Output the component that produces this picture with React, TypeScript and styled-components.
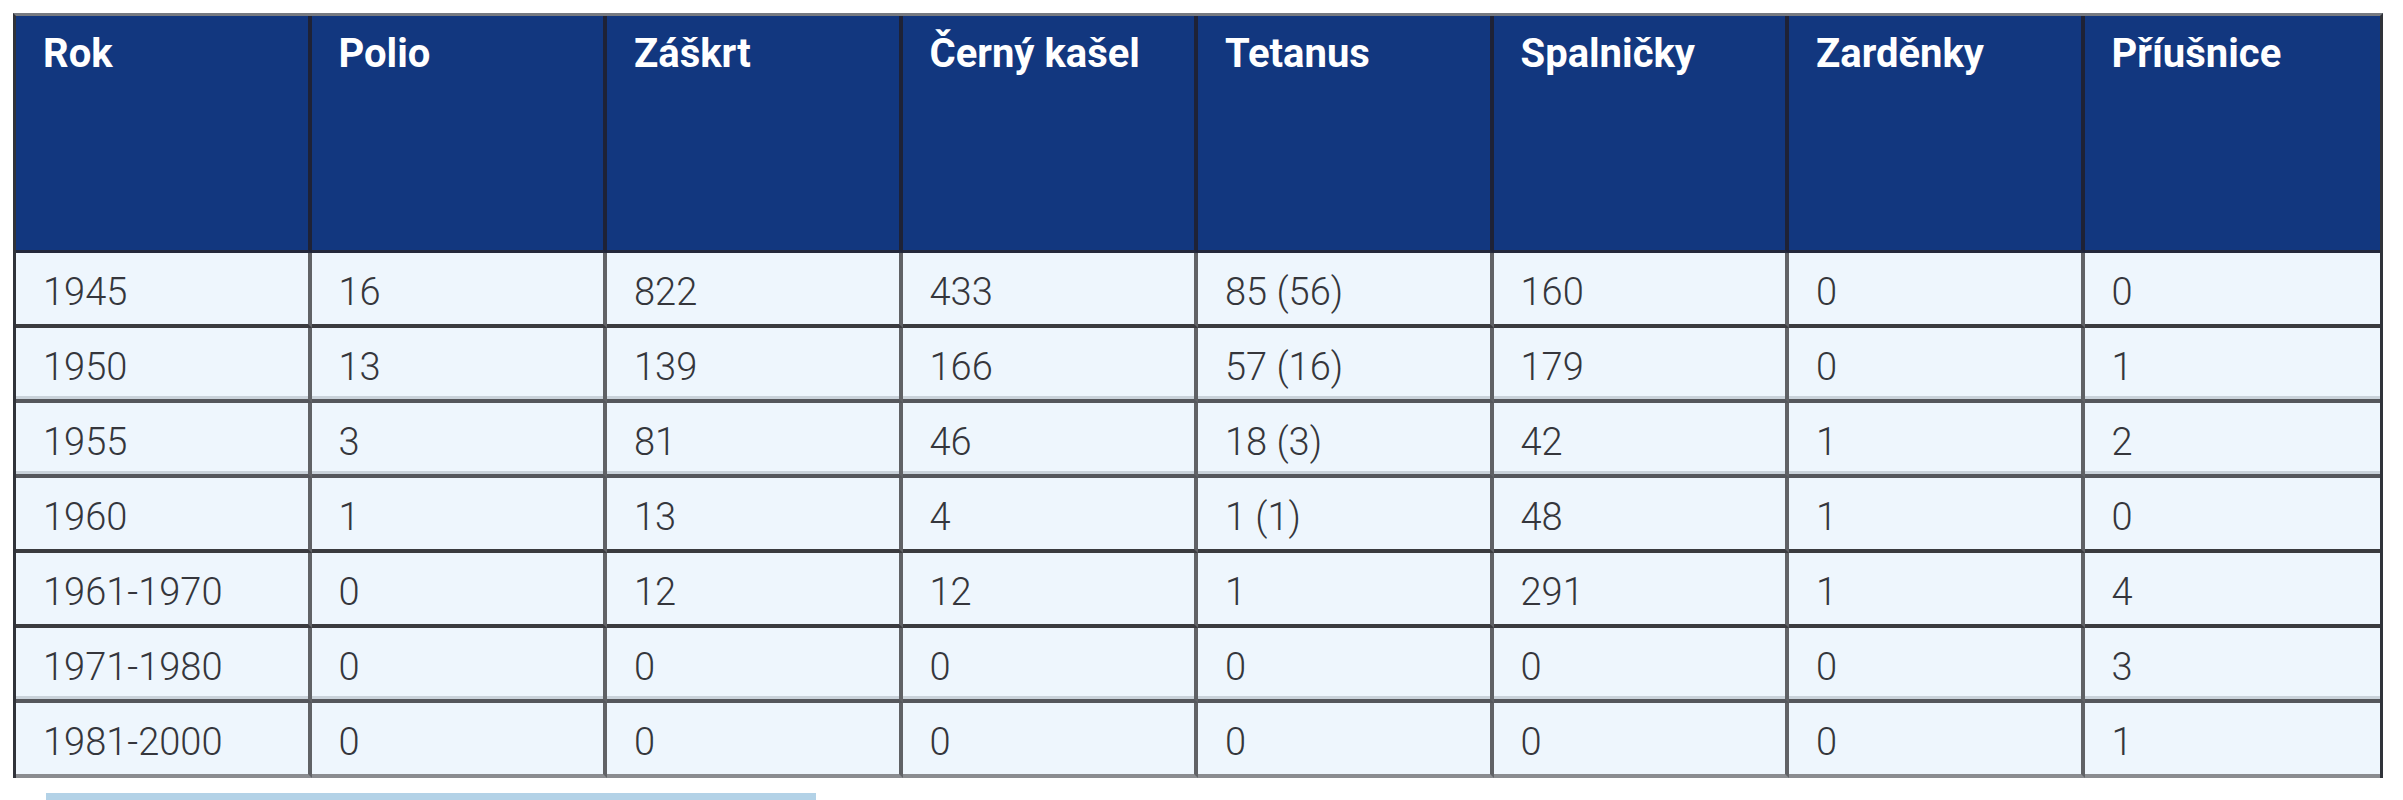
import React from "react";
import styled, { createGlobalStyle } from "styled-components";

const GlobalStyle = createGlobalStyle`
  html, body {
    margin: 0;
    padding: 0;
    background: #ffffff;
  }
  body {
    font-family: Roboto, "Noto Sans", "Liberation Sans", sans-serif;
  }
`;

const Page = styled.div`
  padding: 13px 0 0 13px;
  width: 2403px;
  height: 800px;
  box-sizing: border-box;
  display: flex;
  flex-direction: column;
  align-items: flex-start;
`;

const Grid = styled.div`
  display: grid;
  grid-template-columns: repeat(8, 1fr);
  width: 2370px;
  box-sizing: border-box;
  border-top: 3px solid #777a80;
  border-left: 3px solid #30333a;
  border-right: 3px solid #30333a;
`;

const HeadCell = styled.div<{ $last?: boolean }>`
  height: 237px;
  box-sizing: border-box;
  background: #12377f;
  color: #ffffff;
  font-family: Roboto, "Noto Sans", sans-serif;
  font-weight: 700;
  font-size: 40px;
  line-height: 48px;
  padding: 14px 0 0 27px;
  border-bottom: 3px solid #23283a;
  border-right: ${(p) => (p.$last ? "none" : "4px solid #1e2236")};
  white-space: nowrap;
`;

const BodyCell = styled.div<{ $last?: boolean; $bottom?: boolean; $soft?: boolean }>`
  height: 75px;
  box-sizing: border-box;
  background: #eef6fd;
  color: #35363c;
  font-family: Roboto, "Noto Sans", sans-serif;
  font-weight: 300;
  font-size: 38px;
  line-height: 38px;
  padding: 20px 0 0 27px;
  border-right: ${(p) => (p.$last ? "none" : "4px solid #606266")};
  border-bottom: 4px solid
    ${(p) => (p.$bottom ? "#8a8c90" : p.$soft ? "#55575c" : "#3a3b3f")};
  box-shadow: ${(p) => (p.$soft ? "inset 0 -3px 0 #c9d2da" : "none")};
  white-space: nowrap;
`;

const Bar = styled.div`
  margin: 15px 0 0 33px;
  width: 770px;
  height: 7px;
  background: #b3d2e7;
`;

const headers = [
  "Rok",
  "Polio",
  "Záškrt",
  "Černý kašel",
  "Tetanus",
  "Spalničky",
  "Zarděnky",
  "Příušnice",
];

const rows: string[][] = [
  ["1945", "16", "822", "433", "85 (56)", "160", "0", "0"],
  ["1950", "13", "139", "166", "57 (16)", "179", "0", "1"],
  ["1955", "3", "81", "46", "18 (3)", "42", "1", "2"],
  ["1960", "1", "13", "4", "1 (1)", "48", "1", "0"],
  ["1961-1970", "0", "12", "12", "1", "291", "1", "4"],
  ["1971-1980", "0", "0", "0", "0", "0", "0", "3"],
  ["1981-2000", "0", "0", "0", "0", "0", "0", "1"],
];

const softRows = new Set([1, 2, 5]);

export default function App() {
  return (
    <>
      <GlobalStyle />
      <Page>
        <Grid>
          {headers.map((h, i) => (
            <HeadCell key={h} $last={i === headers.length - 1}>
              {h}
            </HeadCell>
          ))}
          {rows.map((r, ri) =>
            r.map((c, ci) => (
              <BodyCell
                key={`${ri}-${ci}`}
                $last={ci === r.length - 1}
                $bottom={ri === rows.length - 1}
                $soft={softRows.has(ri)}
              >
                {c}
              </BodyCell>
            ))
          )}
        </Grid>
        <Bar />
      </Page>
    </>
  );
}
